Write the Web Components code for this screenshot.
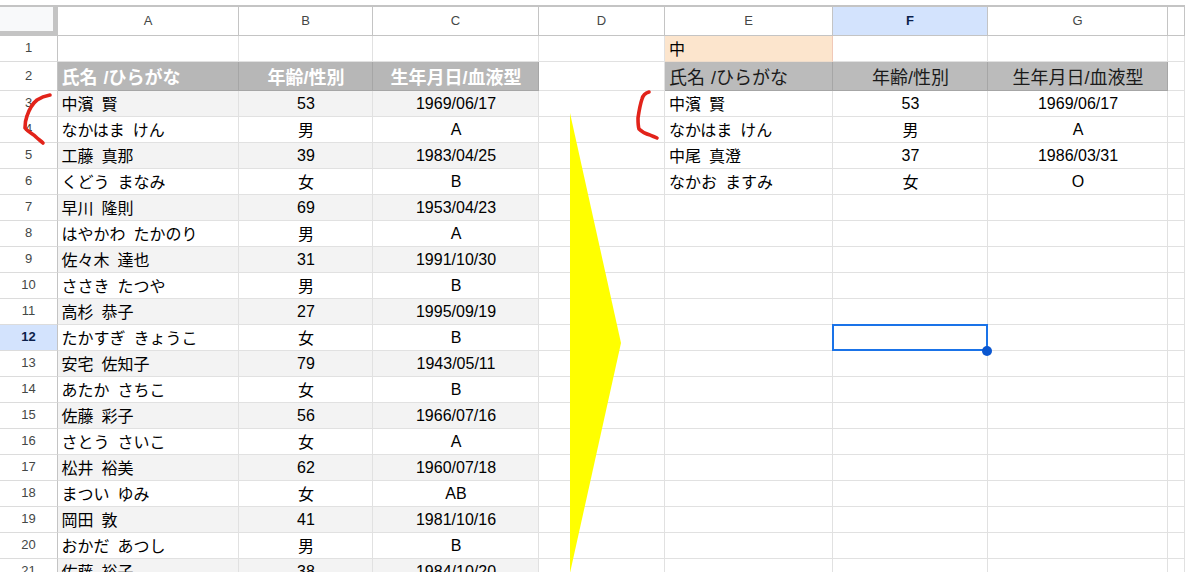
<!DOCTYPE html>
<html lang="ja">
<head>
<meta charset="utf-8">
<title>sheet</title>
<style>
  html, body { margin: 0; height: 572px; overflow: hidden; background: #fff; }
</style>
</head>
<body>
<sheet-app></sheet-app>
<script>
const COLS = ["A", "B", "C", "D", "E", "F", "G", ""];
const ACTIVE_COL = "F";
const ACTIVE_ROW = 12;

const leftRows = [
  ["中濱 賢", "53", "1969/06/17"],
  ["なかはま けん", "男", "A"],
  ["工藤 真那", "39", "1983/04/25"],
  ["くどう まなみ", "女", "B"],
  ["早川 隆則", "69", "1953/04/23"],
  ["はやかわ たかのり", "男", "A"],
  ["佐々木 達也", "31", "1991/10/30"],
  ["ささき たつや", "男", "B"],
  ["高杉 恭子", "27", "1995/09/19"],
  ["たかすぎ きょうこ", "女", "B"],
  ["安宅 佐知子", "79", "1943/05/11"],
  ["あたか さちこ", "女", "B"],
  ["佐藤 彩子", "56", "1966/07/16"],
  ["さとう さいこ", "女", "A"],
  ["松井 裕美", "62", "1960/07/18"],
  ["まつい ゆみ", "女", "AB"],
  ["岡田 敦", "41", "1981/10/16"],
  ["おかだ あつし", "男", "B"],
  ["佐藤 裕子", "38", "1984/10/20"],
];
const rightRows = [
  ["中濱 賢", "53", "1969/06/17"],
  ["なかはま けん", "男", "A"],
  ["中尾 真澄", "37", "1986/03/31"],
  ["なかお ますみ", "女", "O"],
];
const titles = ["氏名 /ひらがな", "年齢/性別", "生年月日/血液型"];

class SheetCell extends HTMLElement {
  constructor() {
    super();
    this.attachShadow({ mode: "open" }).innerHTML = `
      <style>
        :host {
          display: flex;
          align-items: center;
          box-sizing: border-box;
          min-width: 0;
          padding: 0 3px 0 4px;
          border-right: 1px solid #e1e1e1;
          border-bottom: 1px solid #e1e1e1;
          font: 16px "Liberation Sans", "Noto Sans CJK JP", sans-serif;
          color: #000;
          white-space: nowrap;
          overflow: hidden;
        }
        :host([center]) { justify-content: center; }
        :host([tight]) { padding-left: 3.5px; }
        :host([alt]) { background: #f3f3f3; }
        :host([cjk]) { padding-bottom: 2px; word-spacing: 3.5px; }
        :host([title-cell]) {
          background: #b7b7b7;
          font-size: 18px;
          border-right-color: #a6a6a6;
          border-bottom-color: #a6a6a6;
          padding-top: 0;
          padding-bottom: 1px;
          word-spacing: 1px;
        }
        :host([title-cell][light]) { background: #bbbbbb; color: #1a1a1a; }
        :host([title-cell][strong]) { color: #fff; font-weight: bold; }
        :host([query]) {
          background: #fce5cd;
          border-right-color: #f0c9b8;
          border-bottom-color: #eedccb;
        }
      </style>
      <slot></slot>`;
  }
}
customElements.define("sheet-cell", SheetCell);

class SheetHeader extends HTMLElement {
  constructor() {
    super();
    this.attachShadow({ mode: "open" }).innerHTML = `
      <style>
        :host {
          display: flex;
          align-items: center;
          justify-content: center;
          box-sizing: border-box;
          border-right: 1px solid #c4c4c4;
          border-bottom: 1px solid #c4c4c4;
          font: 13px "Liberation Sans", Roboto, sans-serif;
          color: #444746;
          background: #fff;
        }
        :host([kind="col"]) {
          border-top: 2px solid #c4c4c4;
          padding-bottom: 2px;
        }
        :host([active]) {
          background: #d3e3fd;
          color: #0b1f4b;
          font-weight: 700;
        }
        :host([kind="row"]) { border-bottom-color: #dcdcdc; padding-bottom: 2px; }
      </style>
      <slot></slot>`;
  }
}
customElements.define("sheet-header", SheetHeader);

class SheetCorner extends HTMLElement {
  constructor() {
    super();
    this.attachShadow({ mode: "open" }).innerHTML = `
      <style>
        :host {
          display: block;
          box-sizing: border-box;
          border-top: 2px solid #c4c4c4;
          border-right: 5px solid #c4c4c4;
          border-bottom: 5px solid #c4c4c4;
          background: #f8f9fa;
        }
      </style>`;
  }
}
customElements.define("sheet-corner", SheetCorner);

// selection box that sits on top of the active cell
class SheetSelection extends HTMLElement {
  constructor() {
    super();
    this.attachShadow({ mode: "open" }).innerHTML = `
      <style>
        :host { position: absolute; inset: 0; z-index: 3; pointer-events: none; }
        .box {
          position: absolute;
          left: -1px;
          top: -1px;
          right: 0;
          bottom: 0;
          border: 2px solid #1a73e8;
        }
        .handle {
          position: absolute;
          right: -4px;
          bottom: -5px;
          box-sizing: border-box;
          width: 10px;
          height: 10px;
          border-radius: 50%;
          background: #0b57d0;
        }
      </style>
      <div class="box"></div>
      <div class="handle"></div>`;
  }
}
customElements.define("sheet-selection", SheetSelection);

// arrow and pen strokes drawn over the sheet
class SheetMarks extends HTMLElement {
  constructor() {
    super();
    this.attachShadow({ mode: "open" }).innerHTML = `
      <style>
        :host { position: absolute; left: 0; top: 0; z-index: 4; pointer-events: none; }
        svg { display: block; }
        path { fill: none; stroke: #e2231a; stroke-width: 3.6; stroke-linecap: round; stroke-linejoin: round; }
      </style>
      <svg width="1185" height="572" viewBox="0 0 1185 572">
        <polygon points="570,113 621,343 570,573" fill="#ffff00"/>
        <path d="M50 95 C44 96 40 98 37 100 C32 104 29 110 27 116 C25 121 25 124 25 128 C28 132 33 134 36 137 C38 139 41 141 43 143"/>
        <path d="M649 92 C645 93 643 95 642 99 C640 105 639 111 638 118 C638 122 638 126 639 129 C642 132 646 134 650 135 C652 136 655 137 657 138"/>
      </svg>`;
  }
}
customElements.define("sheet-marks", SheetMarks);

class SheetApp extends HTMLElement {
  constructor() {
    super();
    this.attachShadow({ mode: "open" }).innerHTML = `
      <style>
        :host {
          display: block;
          position: relative;
          width: 1185px;
          height: 572px;
          overflow: hidden;
          background: #fff;
        }
        .grid {
          display: grid;
          position: relative;
          padding-top: 5px;
          grid-template-columns: 58px 181px 134px 166px 126px 168px 155px 180px 17px;
          grid-template-rows: 31px 26px 29px repeat(19, 26px);
        }
      </style>
      <div class="grid"></div>
      <sheet-marks></sheet-marks>`;
  }

  connectedCallback() {
    const grid = this.shadowRoot.querySelector(".grid");
    const add = (tag, text, attrs = {}) => {
      const el = document.createElement(tag);
      if (text) el.textContent = text;
      if (tag === "sheet-cell" && /[^\x00-\x7f]/.test(text)) el.setAttribute("cjk", "");
      for (const k in attrs) el.setAttribute(k, attrs[k]);
      grid.appendChild(el);
      return el;
    };

    add("sheet-corner");
    COLS.forEach((c) => {
      const attrs = { kind: "col" };
      if (c === ACTIVE_COL) attrs.active = "";
      add("sheet-header", c, attrs);
    });

    for (let r = 1; r <= 21; r++) {
      const attrs = { kind: "row" };
      if (r === ACTIVE_ROW) attrs.active = "";
      add("sheet-header", String(r), attrs);

      const left = leftRows[r - 3];
      const right = rightRows[r - 3];
      for (let c = 0; c < 3; c++) {
        const a = c ? { center: "" } : { tight: "" };
        if (r === 2) add("sheet-cell", titles[c], { ...a, "title-cell": "", strong: "" });
        else if (r > 2) add("sheet-cell", left[c], r % 2 ? { ...a, alt: "" } : a);
        else add("sheet-cell", "");
      }
      add("sheet-cell", "");
      for (let c = 0; c < 3; c++) {
        const a = c ? { center: "" } : {};
        if (r === 1 && c === 0) add("sheet-cell", "中", { query: "" });
        else if (r === 2) add("sheet-cell", titles[c], { ...a, "title-cell": "", light: "" });
        else add("sheet-cell", right ? right[c] : "", a);
      }
      add("sheet-cell", "");
    }

    const sel = add("sheet-selection");
    sel.style.gridColumn = "7 / 8";
    sel.style.gridRow = `${ACTIVE_ROW + 1} / ${ACTIVE_ROW + 2}`;
  }
}
customElements.define("sheet-app", SheetApp);
</script>
</body>
</html>
